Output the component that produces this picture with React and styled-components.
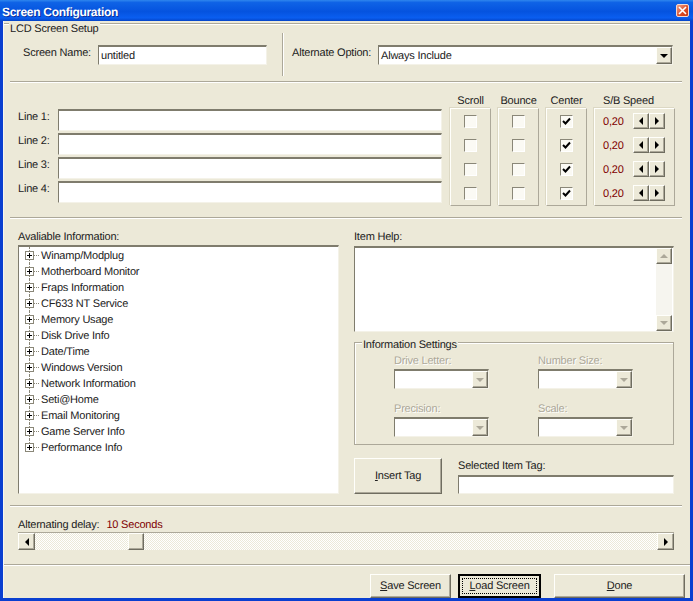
import React from 'react';
import styled, { createGlobalStyle, css } from 'styled-components';

const GlobalStyle = createGlobalStyle`
  html, body {
    margin: 0;
    padding: 0;
    background: #ece9d8;
  }
  * {
    box-sizing: border-box;
  }
`;

const sunken = css`
  background: #fff;
  border-style: solid;
  border-width: 2px 1px 1px 1px;
  border-color: #7f7c6d #f4f2e8 #f4f2e8 #7f7c6d;
`;

const raised = css`
  background: #ece9d8;
  border-style: solid;
  border-width: 1px;
  border-color: #fffffb #6f6d60 #6f6d60 #fffffb;
  box-shadow: inset -1px -1px 0 #aca899;
`;

const dither = css`
  background-color: #fff;
  background-image: repeating-conic-gradient(#ece9d8 0 25%, #fff 0 50%);
  background-size: 2px 2px;
`;

const Window = styled.div`
  width: 693px;
  height: 601px;
  display: flex;
  flex-direction: column;
  background: #0a3fd0;
  font-family: "Liberation Sans", Arial, sans-serif;
  font-size: 11px;
  letter-spacing: -0.2px;
  text-rendering: geometricPrecision;
  color: #222;
  overflow: hidden;
`;

const TitleBar = styled.div`
  height: 21px;
  flex: none;
  display: flex;
  align-items: center;
  justify-content: space-between;
  padding: 2px 4px 0 2px;
  background: linear-gradient(180deg, #2f86ee 0%, #0f63e6 12%, #0553df 55%, #0a5ef0 85%, #0444c8 100%);
`;

const TitleText = styled.span`
  font-size: 12px;
  font-weight: 700;
  letter-spacing: -0.3px;
  color: #fff;
  text-shadow: 1px 1px 0 #0a2f9c;
`;

const CloseButton = styled.div`
  width: 13px;
  height: 13px;
  margin-top: -2px;
  display: flex;
  align-items: center;
  justify-content: center;
  border: 1px solid #f4d8cf;
  border-radius: 2px;
  background: linear-gradient(135deg, #f0a08a, #d8451f 65%, #c23a1a);
`;

const Client = styled.div`
  flex: 1;
  margin: 0 3px 3px;
  display: flex;
  flex-direction: column;
  background: #ece9d8;
  border-left: 1px solid #f7f6ef;
`;

const SetupSection = styled.div`
  position: relative;
  margin-top: 2px;
  height: 58px;
  display: flex;
  align-items: flex-start;
  padding: 9px 0 0 19px;
  border-top: 1px solid #aca899;
  box-shadow: inset 0 1px 0 #fff;
`;

const Legend = styled.span`
  position: absolute;
  top: ${p => p.$top}px;
  left: ${p => p.$left}px;
  padding: 0 1px;
  line-height: 16px;
  background: #ece9d8;
`;

const SetupRow = styled.div`
  display: flex;
  align-items: center;
  height: 44px;
`;

const SetupLabel = styled.label`
  width: ${p => p.$width}px;
  flex: none;
  white-space: nowrap;
  padding-bottom: 4px;
`;

const TextField = styled.div`
  ${sunken}
  width: ${p => p.$width ? `${p.$width}px` : '100%'};
  height: ${p => p.$height || 20}px;
  flex: none;
  padding-left: 2px;
  line-height: 18px;
`;

const VerticalRule = styled.div`
  width: 2px;
  height: 43px;
  margin: 0 8px 0 15px;
  flex: none;
  align-self: flex-start;
  border-left: 1px solid #aca899;
  border-right: 1px solid #fff;
`;

const Combo = styled.div`
  ${sunken}
  width: ${p => p.$width}px;
  height: 20px;
  flex: none;
  display: flex;
  align-items: stretch;
  justify-content: space-between;
  padding-left: 2px;
  line-height: 18px;
`;

const ArrowButton = styled.div`
  ${raised}
  width: ${p => p.$width || 16}px;
  height: ${p => p.$height ? `${p.$height}px` : 'auto'};
  flex: none;
  display: flex;
  align-items: center;
  justify-content: center;
  color: ${p => p.$disabled ? '#aca899' : '#000'};
`;

const Divider = styled.div`
  height: 2px;
  flex: none;
  margin: ${p => p.$top || 0}px 8px 0 6px;
  border-top: 1px solid #aca899;
  border-bottom: 1px solid #fff;
`;

const LinesSection = styled.div`
  display: flex;
  padding: 10px 0 0 14px;
`;

const LineFields = styled.div`
  width: 424px;
  padding-top: 16px;
  margin-right: 8px;
  display: flex;
  flex-direction: column;
  gap: 2px;
`;

const LineRow = styled.div`
  display: flex;
  height: 22px;
`;

const LineLabel = styled.label`
  width: 40px;
  flex: none;
  line-height: 16px;
`;

const OptionColumn = styled.div`
  width: ${p => p.$width || 41}px;
  margin-right: 7px;
`;

const OptionTitle = styled.div`
  height: 15px;
  line-height: 16px;
  text-align: center;
  white-space: nowrap;
`;

const SpeedTitle = styled(OptionTitle)`
  text-align: left;
  padding-left: 9px;
`;

const OptionBox = styled.div`
  height: 98px;
  border: 1px solid;
  border-color: #fffffb #aca899 #aca899 #fffffb;
  box-shadow: -1px -1px 0 #dcd8c4;
`;

const OptionRow = styled.div`
  height: 24px;
  display: flex;
  align-items: center;
  justify-content: center;
`;

const SpeedRow = styled.div`
  height: 24px;
  display: flex;
  align-items: center;
  padding-left: 8px;
`;

const SpeedValue = styled.span`
  width: 30px;
  padding-top: 2px;
  color: #800000;
`;

const CheckBox = styled.div`
  width: 13px;
  height: 13px;
  display: flex;
  align-items: center;
  justify-content: center;
  background: #fbfaf4;
  border: 1px solid;
  border-color: #8a8778 #fff #fff #8a8778;
`;

const InfoSection = styled.div`
  display: flex;
  gap: 15px;
  padding: 10px 0 0 14px;
`;

const LeftColumn = styled.div`
  width: 321px;
  flex: none;
`;

const RightColumn = styled.div`
  width: 320px;
  flex: none;
`;

const FieldLabel = styled.div`
  height: 14px;
  line-height: 16px;
  white-space: nowrap;
`;

const Tree = styled.ul`
  ${sunken}
  height: 249px;
  margin: 2px 0 0;
  padding: 0 0 0 6px;
  list-style: none;
`;

const TreeItem = styled.li`
  position: relative;
  height: 16px;
  padding-top: 1px;
  display: flex;
  align-items: center;
  white-space: nowrap;

  &::before {
    content: '';
    position: absolute;
    left: 4px;
    top: 0;
    height: ${p => p.$last ? 8 : 16}px;
    border-left: 1px dotted #8a8778;
  }

  &::after {
    content: '';
    position: absolute;
    left: 9px;
    top: 8px;
    width: 5px;
    border-top: 1px dotted #8a8778;
  }
`;

const Expander = styled.span`
  position: relative;
  z-index: 1;
  width: 9px;
  height: 9px;
  margin-right: 7px;
  flex: none;
  background: #fff;
  border: 1px solid #8a8778;

  &::before {
    content: '';
    position: absolute;
    left: 1px;
    top: 3px;
    width: 5px;
    height: 1px;
    background: #000;
  }

  &::after {
    content: '';
    position: absolute;
    left: 3px;
    top: 1px;
    width: 1px;
    height: 5px;
    background: #000;
  }
`;

const HelpBox = styled.div`
  ${sunken}
  height: 86px;
  margin-top: 3px;
  display: flex;
  justify-content: flex-end;
  padding: 0 1px 0 0;
`;

const VerticalTrack = styled.div`
  width: 16px;
  display: flex;
  flex-direction: column;
  justify-content: space-between;
  background: #f6f5ef;
`;

const SettingsGroup = styled.div`
  position: relative;
  height: 103px;
  margin-top: 10px;
  padding: 10px 0 0 39px;
  border: 1px solid #aca899;
  box-shadow: inset 1px 1px 0 #fff;
  display: grid;
  grid-template-columns: 144px 144px;
  grid-auto-rows: 36px;
  row-gap: 12px;
`;

const DisabledLabel = styled.div`
  height: 16px;
  line-height: 16px;
  color: #aca899;
  text-shadow: 1px 1px 0 #fff;
`;

const BottomRow = styled.div`
  display: flex;
  margin-top: 13px;
`;

const PushButton = styled.div`
  ${raised}
  width: ${p => p.$width}px;
  height: ${p => p.$height}px;
  flex: none;
  display: flex;
  align-items: center;
  justify-content: center;
  white-space: nowrap;
  position: relative;
  ${p => p.$focused && css`
    border: 2px solid #000;
    box-shadow: none;
    outline: 1px dotted #000;
    outline-offset: -5px;
  `}
`;

const TagColumn = styled.div`
  width: 216px;
  margin-left: 16px;
`;

const TagLabel = styled(FieldLabel)`
  height: 17px;
`;

const DelaySection = styled.div`
  padding: 10px 16px 0 14px;
`;

const DelayValue = styled.span`
  margin-left: 7px;
  color: #800000;
`;

const Scrollbar = styled.div`
  ${dither}
  height: 18px;
  margin-top: 1px;
  display: flex;
  justify-content: space-between;
  position: relative;
  border-top: 1px solid #aca899;
`;

const Thumb = styled.div`
  ${raised}
  position: absolute;
  top: 0;
  left: 110px;
  width: 16px;
  height: 17px;
`;

const Footer = styled.div`
  margin-top: auto;
  height: 34px;
  display: flex;
  justify-content: flex-end;
  padding: 9px 5px 0 0;
  border-top: 1px solid #aca899;
  box-shadow: inset 0 1px 0 #fff;
  gap: 7px;
`;

const DoneSlot = styled.div`
  margin-left: 6px;
`;

const Triangle = ({ dir }) => {
  const points = {
    left: '5,0 5,8 1,4',
    right: '1,0 1,8 5,4',
    up: '0,5 8,5 4,1',
    down: '0,1 8,1 4,5',
  };
  const vertical = dir === 'up' || dir === 'down';
  return (
    <svg width={vertical ? 8 : 6} height={vertical ? 6 : 8} viewBox={vertical ? '0 0 8 6' : '0 0 6 8'}>
      <polygon points={points[dir]} fill="currentColor" />
    </svg>
  );
};

const CheckMark = () => (
  <svg width="9" height="9" viewBox="0 0 9 9">
    <path d="M1 4 L3.5 6.5 L8 1.5" fill="none" stroke="#000" strokeWidth="2" />
  </svg>
);

const treeItems = [
  'Winamp/Modplug',
  'Motherboard Monitor',
  'Fraps Information',
  'CF633 NT Service',
  'Memory Usage',
  'Disk Drive Info',
  'Date/Time',
  'Windows Version',
  'Network Information',
  'Seti@Home',
  'Email Monitoring',
  'Game Server Info',
  'Performance Info',
];

const lines = [1, 2, 3, 4];

const App = () => {
  return (
    <Window>
      <GlobalStyle />
      <TitleBar>
        <TitleText>Screen Configuration</TitleText>
        <CloseButton>
          <svg width="9" height="9" viewBox="0 0 9 9">
            <path d="M1 1 L8 8 M8 1 L1 8" stroke="#fff" strokeWidth="1.6" />
          </svg>
        </CloseButton>
      </TitleBar>
      <Client>
        <SetupSection>
          <Legend $top={-3} $left={5}>LCD Screen Setup</Legend>
          <SetupRow>
            <SetupLabel $width={75}>Screen Name:</SetupLabel>
            <TextField $width={169}>untitled</TextField>
          </SetupRow>
          <VerticalRule />
          <SetupRow>
            <SetupLabel $width={86}>Alternate Option:</SetupLabel>
            <Combo $width={295}>
              Always Include
              <ArrowButton><Triangle dir="down" /></ArrowButton>
            </Combo>
          </SetupRow>
        </SetupSection>
        <Divider />
        <LinesSection>
          <LineFields>
            {lines.map(n => (
              <LineRow key={n}>
                <LineLabel>Line {n}:</LineLabel>
                <TextField $width={384} $height={22} />
              </LineRow>
            ))}
          </LineFields>
          {['Scroll', 'Bounce', 'Center'].map(title => (
            <OptionColumn key={title}>
              <OptionTitle>{title}</OptionTitle>
              <OptionBox>
                {lines.map(n => (
                  <OptionRow key={n}>
                    <CheckBox>{title === 'Center' && <CheckMark />}</CheckBox>
                  </OptionRow>
                ))}
              </OptionBox>
            </OptionColumn>
          ))}
          <OptionColumn $width={81}>
            <SpeedTitle>S/B Speed</SpeedTitle>
            <OptionBox>
              {lines.map(n => (
                <SpeedRow key={n}>
                  <SpeedValue>0,20</SpeedValue>
                  <ArrowButton $width={16} $height={16}><Triangle dir="left" /></ArrowButton>
                  <ArrowButton $width={16} $height={16}><Triangle dir="right" /></ArrowButton>
                </SpeedRow>
              ))}
            </OptionBox>
          </OptionColumn>
        </LinesSection>
        <Divider $top={11} />
        <InfoSection>
          <LeftColumn>
            <FieldLabel>Avaliable Information:</FieldLabel>
            <Tree>
              {treeItems.map((item, i) => (
                <TreeItem key={item} $last={i === treeItems.length - 1}>
                  <Expander />
                  {item}
                </TreeItem>
              ))}
            </Tree>
          </LeftColumn>
          <RightColumn>
            <FieldLabel>Item Help:</FieldLabel>
            <HelpBox>
              <VerticalTrack>
                <ArrowButton $disabled $height={16}><Triangle dir="up" /></ArrowButton>
                <ArrowButton $disabled $height={16}><Triangle dir="down" /></ArrowButton>
              </VerticalTrack>
            </HelpBox>
            <SettingsGroup>
              <Legend $top={-6} $left={7}>Information Settings</Legend>
              {['Drive Letter:', 'Number Size:', 'Precision:', 'Scale:'].map(label => (
                <div key={label}>
                  <DisabledLabel>{label}</DisabledLabel>
                  <Combo $width={95}>
                    <span />
                    <ArrowButton $disabled><Triangle dir="down" /></ArrowButton>
                  </Combo>
                </div>
              ))}
            </SettingsGroup>
            <BottomRow>
              <PushButton $width={88} $height={36}><span><u>I</u>nsert Tag</span></PushButton>
              <TagColumn>
                <TagLabel>Selected Item Tag:</TagLabel>
                <TextField $height={19} />
              </TagColumn>
            </BottomRow>
          </RightColumn>
        </InfoSection>
        <Divider $top={11} />
        <DelaySection>
          <FieldLabel>
            Alternating delay:<DelayValue>10 Seconds</DelayValue>
          </FieldLabel>
          <Scrollbar>
            <ArrowButton $width={17}><Triangle dir="left" /></ArrowButton>
            <Thumb />
            <ArrowButton $width={17}><Triangle dir="right" /></ArrowButton>
          </Scrollbar>
        </DelaySection>
        <Footer>
          <PushButton $width={81} $height={24}><span><u>S</u>ave Screen</span></PushButton>
          <PushButton $width={83} $height={24} $focused><span><u>L</u>oad Screen</span></PushButton>
          <DoneSlot>
            <PushButton $width={131} $height={24}><span><u>D</u>one</span></PushButton>
          </DoneSlot>
        </Footer>
      </Client>
    </Window>
  );
};

export default App;
